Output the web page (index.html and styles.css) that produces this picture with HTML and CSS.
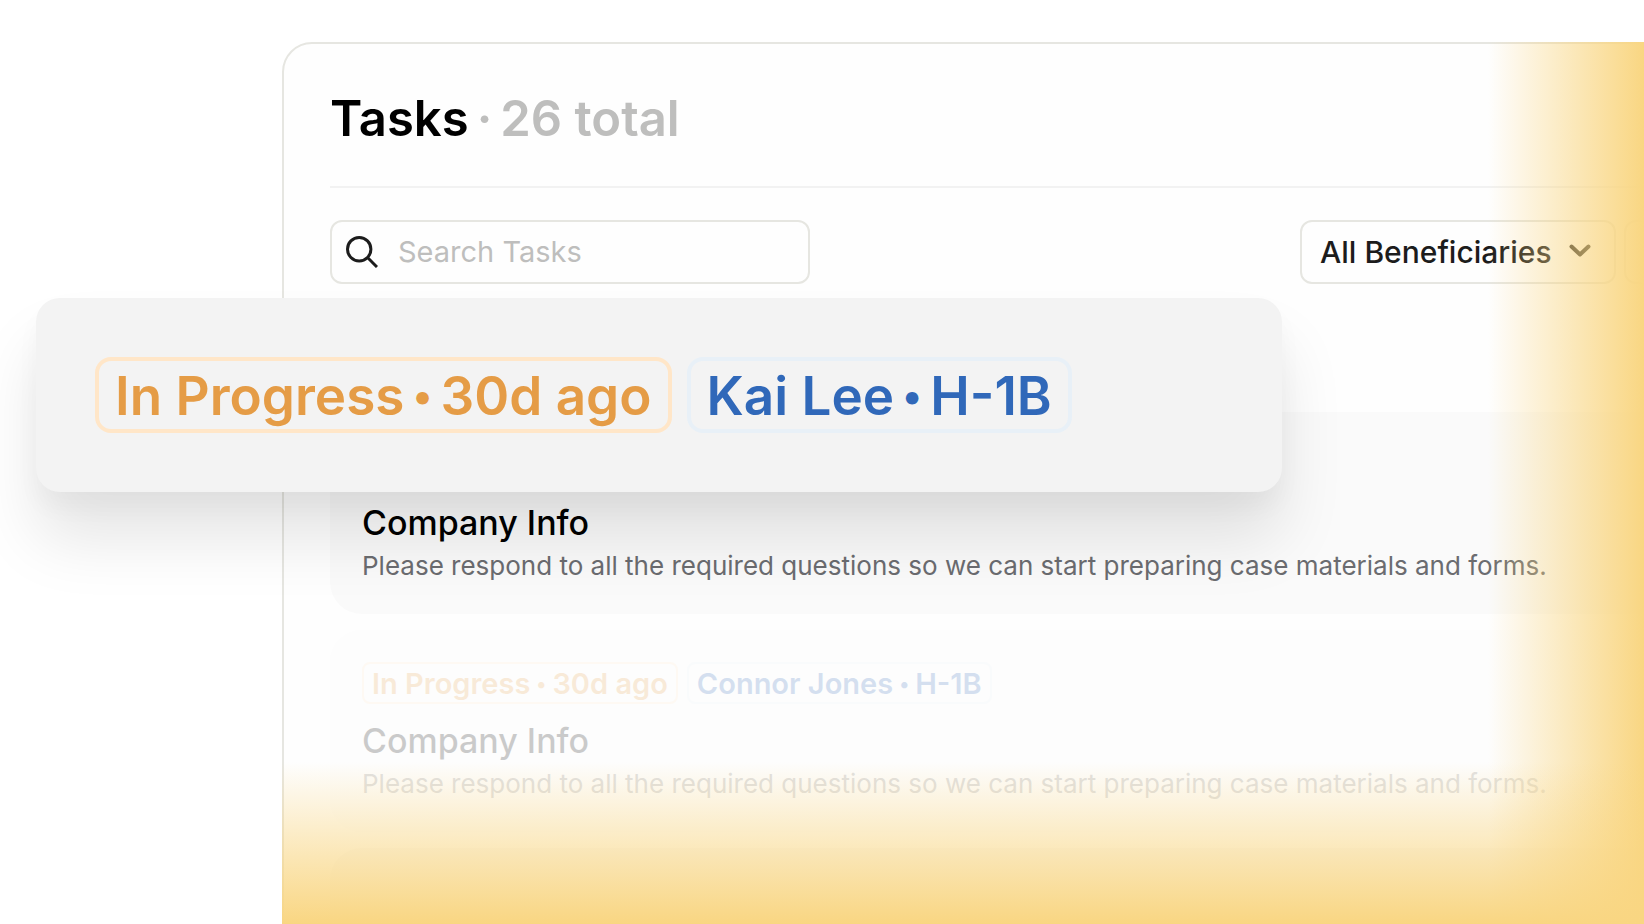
FILE: index.html
```html
<!DOCTYPE html>
<html lang="en">
<head>
<meta charset="utf-8">
<meta name="viewport" content="width=device-width, initial-scale=1">
<title>Tasks</title>
<link rel="stylesheet" href="styles.css">
</head>
<body>
<main class="scene">
  <section class="panel">
    <header class="panel-header">
      <h1 class="heading"><span>Tasks</span><span class="muted">·</span><span class="muted">26 total</span></h1>
    </header>
    <div class="toolbar">
      <label class="search">
        <svg class="search-icon" viewBox="0 0 32 32" aria-hidden="true"><circle cx="13.200" cy="13.200" r="11.700"/><path d="M21.500 21.500 31 31"/></svg>
        <input class="search-input" type="search" placeholder="Search Tasks" aria-label="Search Tasks">
      </label>
      <div class="filters">
        <div class="filter">
          <select class="filter-select" aria-label="Beneficiary"><option>All Beneficiaries</option></select>
          <svg class="chevron" viewBox="0 0 22 14" aria-hidden="true"><path d="M2.500 2.500 11 10.500 19.500 2.500"/></svg>
        </div>
        <div class="filter filter-next">
          <select class="filter-select" aria-label="Status"></select>
        </div>
      </div>
    </div>
    <div class="tasks">
      <article class="task">
        <h2 class="task-title">Company Info</h2>
        <p class="task-text">Please respond to all the required questions so we can start preparing case materials and forms.</p>
      </article>
      <article class="task task-faded">
        <div class="tags">
          <span class="tag tag-status"><span>In Progress</span><span class="dot">•</span><span>30d ago</span></span>
          <span class="tag tag-person"><span>Connor Jones</span><span class="dot">•</span><span>H-1B</span></span>
        </div>
        <h2 class="task-title">Company Info</h2>
        <p class="task-text">Please respond to all the required questions so we can start preparing case materials and forms.</p>
      </article>
      <article class="task"></article>
    </div>
  </section>
  <div class="fade fade-right"></div>
  <div class="fade fade-bottom"></div>
  <aside class="callout">
    <span class="tag tag-large tag-status"><span>In Progress</span><span class="dot">•</span><span>30d ago</span></span>
    <span class="tag tag-large tag-person"><span>Kai Lee</span><span class="dot">•</span><span>H-1B</span></span>
  </aside>
</main>
</body>
</html>
```

FILE: styles.css
```css
* {
  box-sizing: border-box;
}

body {
  margin: 0;
  background: #fff;
  color: #000;
  font-family: Inter, "Open Sans", sans-serif;
}

.scene {
  position: relative;
  height: 100vh;
  overflow: hidden;
  padding: 42px 0 0 282px;
}

/* The panel runs past the right edge of the window. */
.panel {
  margin-right: -300px;
  padding: 0 46px;
  border: 2px solid #e6e6e1;
  border-radius: 30px;
  background: #fefefe;
}

.panel-header {
  padding: 45px 0 37px;
  border-bottom: 2px solid #f2f2f2;
}

.heading {
  display: flex;
  gap: 8px;
  margin: 0;
  font-size: 49px;
  line-height: 60px;
  font-weight: 600;
}

.muted {
  color: #bebebd;
}

.toolbar {
  display: flex;
  justify-content: space-between;
  padding: 32px 0 128px;
}

.search {
  display: flex;
  align-items: center;
  gap: 20px;
  width: 480px;
  height: 64px;
  padding: 0 14px;
  border: 2px solid #e6e6e1;
  border-radius: 12px;
}

.search-icon {
  flex: none;
  width: 32px;
  height: 32px;
  fill: none;
  stroke: #1c1c1c;
  stroke-width: 3;
}

.search-input {
  flex: 1;
  min-width: 0;
  padding: 0;
  border: 0;
  outline: 0;
  background: none;
  color: #1c1c1c;
  font: 400 29px/40px Inter, "Open Sans", sans-serif;
}

.search-input::placeholder {
  color: #bebebd;
  opacity: 1;
}

.filters {
  display: flex;
  gap: 8px;
}

.filter {
  position: relative;
  width: 316px;
}

.filter-next {
  width: 272px;
}

.filter-select {
  appearance: none;
  width: 100%;
  height: 64px;
  padding: 0 18px;
  border: 2px solid #e6e6e1;
  border-radius: 12px;
  background: transparent;
  color: #1c1c1c;
  font: 500 30px/40px Inter, "Open Sans", sans-serif;
}

.chevron {
  position: absolute;
  top: 24px;
  right: 25px;
  width: 22px;
  height: 14px;
  fill: none;
  stroke: #1c1c1c;
  stroke-width: 4;
  stroke-linecap: round;
  stroke-linejoin: round;
  pointer-events: none;
}

.tasks {
  display: flex;
  flex-direction: column;
  gap: 16px;
}

.task {
  display: flex;
  flex-direction: column;
  justify-content: flex-end;
  min-height: 202px;
  padding: 32px 32px 33px;
  border-radius: 32px;
  background: #fafafa;
}

.task-faded {
  opacity: 0.2;
}

.tags {
  display: flex;
  gap: 9px;
  margin-bottom: 17px;
}

.task-title {
  margin: 0 0 8px;
  font-size: 34px;
  line-height: 40px;
  font-weight: 500;
}

.task-text {
  margin: 0;
  color: #6b6c70;
  font-size: 26px;
  line-height: 30px;
  white-space: nowrap;
}

.tag {
  display: flex;
  gap: 6px;
  padding: 2px 8px 0;
  border: 2px solid;
  border-radius: 8px;
  font-size: 29px;
  line-height: 36px;
  font-weight: 600;
  white-space: nowrap;
}

.dot {
  font-size: 20px;
}

.tag-status {
  border-color: #ffe6c8;
  color: #e59c46;
}

.tag-person {
  border-color: #e8f0f7;
  color: #3068b9;
}

.tag-large {
  gap: 8px;
  padding: 2px 16px 0;
  border-width: 4px;
  border-radius: 16px;
  font-size: 53px;
  line-height: 66px;
}

.tag-large .dot {
  font-size: 40px;
}

.fade {
  position: absolute;
  right: 0;
  bottom: 0;
  pointer-events: none;
}

.fade-right {
  top: 42px;
  width: 156px;
  background: linear-gradient(to right, rgba(249, 214, 130, 0), #f9d682);
}

.fade-bottom {
  left: 282px;
  height: 162px;
  background: linear-gradient(to bottom, rgba(249, 214, 130, 0), #f9d682);
}

.callout {
  position: absolute;
  top: 298px;
  left: 36px;
  right: 22%;
  display: flex;
  gap: 15px;
  padding: 59px;
  border-radius: 24px;
  background: #f3f3f3;
  box-shadow: 0 16px 24px rgba(0, 0, 0, 0.03), 0 48px 64px rgba(0, 0, 0, 0.1);
}
```
